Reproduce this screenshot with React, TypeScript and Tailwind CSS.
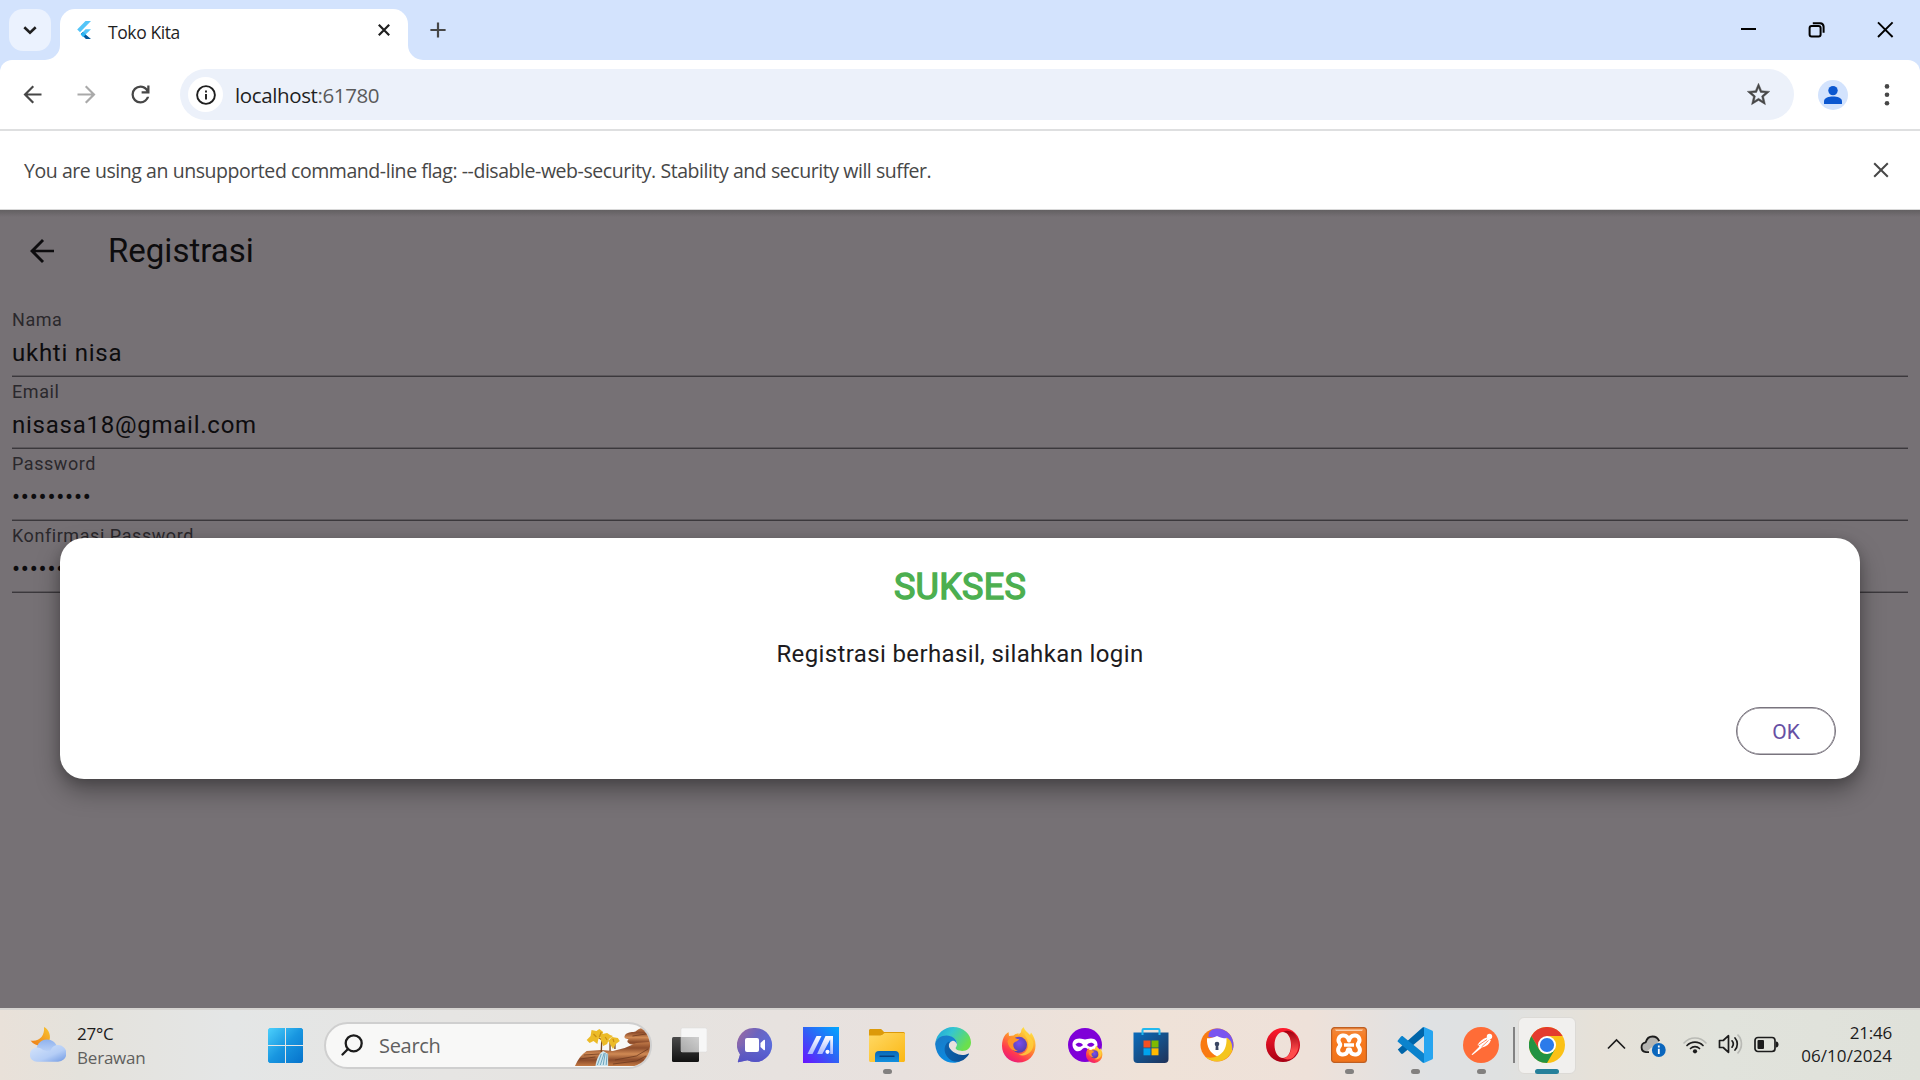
import type { ReactNode } from "react";

const SEGOE = "font-['Open_Sans','Noto_Sans',sans-serif]";

function Icon({ children, className = "size-9" }: { children: ReactNode; className?: string }) {
  return (
    <svg viewBox="0 0 36 36" className={`block shrink-0 ${className}`} fill="none">
      {children}
    </svg>
  );
}

function BackArrow({ className }: { className: string }) {
  return (
    <svg viewBox="0 0 24 24" className={`block shrink-0 ${className}`} fill="currentColor">
      <path d="M20 11.1H7.6l5.75-5.8L12 4l-8 8 8 8 1.35-1.3-5.75-5.8H20z" />
    </svg>
  );
}

function TabStrip() {
  return (
    <div className="flex h-[60px] bg-[#d3e3fd]">
      <div className="flex w-[45px] pt-[9px] pl-[9px]">
        <div className="z-10 flex h-[42px] w-[42px] shrink-0 items-center justify-center rounded-[14px] bg-[#ebf2fe]">
          <svg viewBox="0 0 14 14" className="size-[14px]" fill="none" stroke="#1f1f1f" strokeWidth="2.6">
            <path d="M1.3 4.2 7 9.6l5.7-5.4" />
          </svg>
        </div>
      </div>
      <div className="mt-[45px] h-[15px] w-[15px] bg-white">
        <div className="h-full w-full rounded-br-[15px] bg-[#d3e3fd]" />
      </div>
      <div className="mt-[9px] flex w-[348px] items-center rounded-t-[15px] bg-white pb-[9px]">
        <svg viewBox="0 0 14 18" className="ml-[17px] h-[18px] w-[14px]">
          <path d="M8.5 0H14L3 11.3.2 8.6z" fill="#54c5f8" />
          <path d="M8.5 8.3H14L8.6 13.6 5.9 10.9z" fill="#54c5f8" />
          <path d="m5.9 10.9-2 1.9L8.9 18H14l-5.4-4.4z" fill="#01579b" />
          <path d="m3.6 13.5 2.6-2.6 2.7 2.7-2.7 2.6z" fill="#29b6f6" />
        </svg>
        <span className={`${SEGOE} mt-[3px] ml-[17px] text-[17.5px] leading-[22px] tracking-[-0.4px] whitespace-nowrap text-[#1f1f1f]`}>
          Toko Kita
        </span>
        <svg viewBox="0 0 12 12" className="mr-[18px] ml-auto size-3" stroke="#1f1f1f" strokeWidth="2.2">
          <path d="m.8.8 10.4 10.4M11.2.8.8 11.2" />
        </svg>
      </div>
      <div className="mt-[45px] h-[15px] w-[15px] bg-white">
        <div className="h-full w-full rounded-bl-[15px] bg-[#d3e3fd]" />
      </div>
      <svg viewBox="0 0 16 16" className="mt-[22px] ml-[7px] size-4" stroke="#474747" strokeWidth="2.2">
        <path d="M8 .4v15.2M.4 8h15.2" />
      </svg>
      <div className="mt-[21px] mr-[26px] ml-auto flex gap-[52px] text-black">
        <svg viewBox="0 0 17 17" className="size-[17px]" stroke="currentColor" strokeWidth="2">
          <path d="M2 8h15" />
        </svg>
        <svg viewBox="0 0 17 17" className="size-[17px]" fill="none" stroke="currentColor" strokeWidth="2">
          <rect x="1.6" y="5" width="11" height="10.6" rx="2" />
          <path d="M4.8 2.2h7.4a3.6 3.6 0 0 1 3.4 3.4v6.2" />
        </svg>
        <svg viewBox="0 0 17 17" className="size-[17px]" stroke="currentColor" strokeWidth="1.9">
          <path d="m1 1.4 14.6 14.6M15.6 1.4 1 16" />
        </svg>
      </div>
    </div>
  );
}

function Toolbar() {
  return (
    <div className="bg-[#d3e3fd]">
      <div className="flex h-[71px] items-center rounded-t-[12px] border-b-2 border-[#dedfe0] bg-white text-[#474747]">
        <BackArrow className="ml-[19px] size-[27px]" />
        <BackArrow className="ml-[27px] size-[27px] rotate-180 text-[#a9a9a9]" />
        <svg viewBox="0 0 24 24" className="ml-[27px] size-[27px]" fill="currentColor">
          <path d="M12 20q-3.35 0-5.675-2.325T4 12t2.325-5.675T12 4q1.725 0 3.3.713T18 6.75V4h2v7h-7V9h4.2q-.8-1.4-2.187-2.2T12 6Q9.5 6 7.75 7.75T6 12t1.75 4.25T12 18q1.925 0 3.475-1.1T17.65 14h2.1q-.7 2.65-2.85 4.325T12 20" />
        </svg>
        <div className="ml-[26px] flex h-[51px] w-[1614px] items-center rounded-full bg-[#ecf1fa]">
          <div className="ml-[8px] flex size-[35px] items-center justify-center rounded-full bg-white">
            <svg viewBox="0 0 20 20" className="size-5" fill="none" stroke="#1f1f1f" strokeWidth="1.9">
              <circle cx="10" cy="10" r="8.9" />
              <path d="M10 9v5.6M10 5.4v2" />
            </svg>
          </div>
          <span className={`${SEGOE} ml-[12px] text-[20.5px] leading-[26px] tracking-[-0.380px] whitespace-nowrap text-[#5a5a5a]`}>
            <span className="text-[#1f1f1f]">localhost</span>:61780
          </span>
          <svg viewBox="0 0 24 24" className="mr-[22px] ml-auto size-[27px]" fill="currentColor" stroke="currentColor" strokeWidth=".4">
            <path d="M22 9.24l-7.19-.62L12 2 9.19 8.63 2 9.24l5.46 4.73L5.82 21 12 17.27 18.18 21l-1.63-7.03L22 9.24zM12 15.4l-3.76 2.27 1-4.28-3.32-2.88 4.38-.38L12 6.1l1.71 4.04 4.38.38-3.32 2.88 1 4.28L12 15.4z" />
          </svg>
        </div>
        <svg viewBox="0 0 30 30" className="ml-6 size-[30px]">
          <circle cx="15" cy="15" r="15" fill="#d3e3fd" />
          <circle cx="15" cy="10.6" r="4.7" fill="#0b57d0" />
          <path d="M6 24v-2.800c0-3.400 5-4.700 9-4.700s9 1.300 9 4.700V24z" fill="#0b57d0" />
        </svg>
        <svg viewBox="0 0 6 24" className="ml-[36px] h-6 w-[6px]" fill="currentColor">
          <circle cx="3" cy="3.400" r="2.300" />
          <circle cx="3" cy="11.800" r="2.300" />
          <circle cx="3" cy="20.200" r="2.300" />
        </svg>
      </div>
    </div>
  );
}

function InfoBar() {
  return (
    <div className="flex h-[79px] items-center border-b border-[#d8d8d8] bg-white">
      <span className={`${SEGOE} mt-[2px] ml-6 text-[19.500px] leading-[26px] tracking-[-0.440px] whitespace-nowrap text-[#474747]`}>
        You are using an unsupported command-line flag: --disable-web-security. Stability and security will suffer.
      </span>
      <svg viewBox="0 0 16 16" className="mr-[31px] ml-auto size-4" stroke="#474747" strokeWidth="2">
        <path d="m1.200 1.200 13.600 13.600M14.800 1.200 1.200 14.800" />
      </svg>
    </div>
  );
}

function Field({ label, value }: { label: string; value: string }) {
  return (
    <div className="h-[72px] border-b border-[#3b383c] pt-[5px] shadow-[inset_0_-1px_0_#5c585c]">
      <div className="text-[18px] leading-5 tracking-[0.560px] text-[#2a282c]">{label}</div>
      <div className="mt-[9px] text-[24px] leading-7 tracking-[0.750px] text-[#0d0c0e]">{value}</div>
    </div>
  );
}

function Registration() {
  return (
    <main className="relative h-[798px] overflow-hidden bg-[#767175] font-['Roboto',sans-serif]">
      <div className="absolute inset-x-0 top-0 h-[7px] bg-linear-to-b from-[#636062] to-[#767175]" />
      <header className="flex h-[84px] items-center text-[#0d0c0e]">
        <BackArrow className="mb-[2px] ml-6 size-9" />
        <h1 className="mb-[3px] ml-12 text-[33px] leading-[42px]">Registrasi</h1>
      </header>
      <div className="px-3 pt-[11px]">
        <Field label="Nama" value="ukhti nisa" />
        <Field label="Email" value="nisasa18@gmail.com" />
        <Field label="Password" value="•••••••••" />
        <Field label="Konfirmasi Password" value="•••••••••" />
      </div>
      <div className="absolute inset-x-[60px] top-[327.500px] flex h-[241.500px] flex-col items-center rounded-[24px] bg-white shadow-[0_12px_24px_rgba(0,0,0,0.340),0_3px_12px_rgba(0,0,0,0.160)]">
        <h2 className="mt-[28px] text-[36px] leading-[42px] tracking-[0.250px] text-[#4caf50] [-webkit-text-stroke:1.400px_#4caf50]">SUKSES</h2>
        <p className="mt-[28px] text-[24px] leading-9 tracking-[0.370px] text-[#1d1b20]">Registrasi berhasil, silahkan login</p>
        <button className="mt-auto mr-6 mb-6 h-12 w-[100px] self-end rounded-full border border-[#79747e] pt-px text-[21px] leading-6 text-[#6750a4] shadow-[inset_0_0_0_0.500px_#79747e]">
          OK
        </button>
      </div>
    </main>
  );
}

const TaskView = () => (
  <Icon>
    <defs>
      <linearGradient id="tv" x1="0" y1="0" x2="0" y2="1"><stop stopColor="#4a4a4a" /><stop offset="1" stopColor="#111" /></linearGradient>
      <linearGradient id="tv2" x1="0" y1="1" x2="1" y2="0"><stop stopColor="#a9a9a9" /><stop offset="1" stopColor="#cfcfcf" /></linearGradient>
    </defs>
    <rect x="1" y="10" width="27" height="25" rx="1.500" fill="url(#tv)" />
    <rect x="10" y="1" width="26" height="24" rx="1.500" fill="#f7f7f7" stroke="#d8d8d8" strokeWidth=".5" />
    <path d="M10 10h18v15H11.500L10 23.500z" fill="url(#tv2)" />
  </Icon>
);

const Chat = () => (
  <Icon>
    <defs>
      <linearGradient id="ch" x1="0" y1="0" x2="1" y2=".6"><stop stopColor="#a06a9e" /><stop offset=".5" stopColor="#6a64c0" /><stop offset="1" stopColor="#5a6fe0" /></linearGradient>
      <linearGradient id="ch2" x1="0" y1="0" x2="0" y2="1"><stop offset=".5" stopColor="#5250c0" stopOpacity="0" /><stop offset="1" stopColor="#5552c4" /></linearGradient>
    </defs>
    <path d="M18.500 1a17 17 0 1 1-8 32.200L1.300 35.300c-.5 0-.6-.4-.4-.8L3 27.500A17 17 0 0 1 18.500 1z" fill="url(#ch)" />
    <path d="M18.500 1a17 17 0 1 1-8 32.200L1.300 35.300c-.5 0-.6-.4-.4-.8L3 27.500A17 17 0 0 1 18.500 1z" fill="url(#ch2)" />
    <rect x="8" y="11" width="14" height="14" rx="2" fill="#fff" />
    <path d="M23.500 16l3.200-3c.7-.5 1.300-.2 1.300.6v9c0 .8-.6 1-1.300.5l-3.200-3z" fill="#fff" />
  </Icon>
);

const MyAsus = () => (
  <Icon>
    <defs>
      <linearGradient id="ma" x1="0" y1="1" x2="1" y2="0"><stop stopColor="#6a12ff" /><stop offset=".5" stopColor="#2f62f5" /><stop offset="1" stopColor="#00a8ff" /></linearGradient>
      <linearGradient id="ma2" x1="0" y1="0" x2="0" y2="1"><stop stopColor="#fff" /><stop offset="1" stopColor="#a9b9ff" /></linearGradient>
    </defs>
    <path d="M0 0h36v36H0z" fill="url(#ma)" />
    <path d="M13.500 9h5L9.500 27h-5zM22.500 9h7.500v18h-2.800V12.500L19.300 27h-5.200z" fill="url(#ma2)" />
    <circle cx="24.500" cy="24.800" r="2.100" fill="#fff" />
  </Icon>
);

const Folder = () => (
  <Icon>
    <defs>
      <linearGradient id="fo" x1="0" y1="0" x2="1" y2="1"><stop stopColor="#ffd965" /><stop offset="1" stopColor="#fbb713" /></linearGradient>
      <linearGradient id="fo2" x1="0" y1="0" x2="0" y2="1"><stop stopColor="#0a66b5" /><stop offset="1" stopColor="#1290df" /></linearGradient>
    </defs>
    <path d="M1.500 2H11c1 0 1.600.3 2.200 1L15 5h19.500A1.500 1.500 0 0 1 36 6.500V20H0V3.500C0 2.600.6 2 1.500 2z" fill="#dc9a0a" />
    <path d="M0 8.500h11.500c1 0 1.500-.3 2.200-.9L15.500 6H34.500c1 0 1.500.5 1.500 1.500v25.700c0 1-.7 1.800-1.700 1.800H1.700C.7 35 0 34.200 0 33.200z" fill="url(#fo)" />
    <path d="M6 35v-7a4 4 0 0 1 4-4h16a4 4 0 0 1 4 4v7z" fill="url(#fo2)" />
    <path d="M11 29.300h14" stroke="#083f7d" strokeWidth="1.400" strokeLinecap="round" />
  </Icon>
);

const Edge = () => (
  <Icon>
    <defs>
      <linearGradient id="ed1" x1="0" y1="0" x2="1" y2=".5"><stop stopColor="#1a9fdd" /><stop offset=".45" stopColor="#35c6d0" /><stop offset="1" stopColor="#6be04c" /></linearGradient>
      <linearGradient id="ed2" x1="0" y1="0" x2=".6" y2="1"><stop stopColor="#1b79c4" /><stop offset="1" stopColor="#0a8de4" /></linearGradient>
      <linearGradient id="ed3" x1="0" y1="0" x2="1" y2="0"><stop stopColor="#0d62ad" /><stop offset="1" stopColor="#0c4a8f" /></linearGradient>
    </defs>
    <path d="M.3 16C1.500 6.800 9 0 18 0c10.500 0 18 7.200 18 15.500 0 5.200-3.800 8.500-8.800 8.500-4.200 0-6.600-1.600-6.600-2.900 0-.8 1.400-1.500 1.400-4.100 0-4.400-4.600-8-10.500-8C6.500 9 2 12 .3 16z" fill="url(#ed1)" />
    <path d="M.1 17C1 12 6 8.600 11.500 8.600c6 0 10.500 4 10.500 8.600-1.200-2.500-3-3.800-4.800-3.200-3.200 1-4.400 4.800-3.200 9.200C15.500 29 20 34 25.500 34.300 16 38.500 1.500 34 .1 17z" fill="url(#ed2)" />
    <path d="M12.500 15.500c-3.500 3-4 9-.5 14 3.200 4.500 9 6.500 14 4.600 3.400-1.400 6-4 7.800-6.700.4-.7-.2-1-.8-.7-3 1.600-8.500 2-12.800-.6-5-3-8.200-7-5.500-11.600-.8.100-1.500.4-2.200 1z" fill="url(#ed3)" />
  </Icon>
);

const FirefoxShapes = ({ id }: { id: string }) => (
  <>
    <defs>
      <linearGradient id={`${id}a`} x1=".8" y1="0" x2=".2" y2="1"><stop stopColor="#fff04a" /><stop offset=".4" stopColor="#ff9a2a" /><stop offset=".75" stopColor="#ff3750" /><stop offset="1" stopColor="#e31587" /></linearGradient>
      <radialGradient id={`${id}b`} cx=".5" cy=".4" r=".6"><stop stopColor="#7a4ff0" /><stop offset="1" stopColor="#5440a8" /></radialGradient>
    </defs>
    <path d="M4.500 7.500 7.500 5l.5 4 4.500-.5C14 7 16 6.200 18 6.500L17 8l3-2.800C20 3 21 1.500 22.500 0c1 3.500 4 5 6.500 8l1-2.500c3 4 4.800 8.500 4.500 13.500A16.500 16.500 0 0 1 18 35.500C8.500 35.500 1 28.500 1 19c0-4.500 1-8.500 3.500-11.500z" fill={`url(#${id}a)`} />
    <circle cx="18" cy="17.800" r="8" fill={`url(#${id}b)`} />
    <path d="M6.500 14.500c1-3 3.500-4.500 7-4 1 1 2.500 1.500 4.500 1.500-.5 2.500-4.500 2-5.500 4.500-.8 2.500.5 6 4.500 7.500-5 .5-9-2-10.500-9.500z" fill="#ff9328" />
    <path d="M24 4c-2 4 2.500 6 3 11 1.500 7-3.500 12.500-9.500 12.500 7 3 14.500-2 15-10C33 12 27 9 24 4z" fill="#ffd23c" opacity=".8" />
  </>
);

const Firefox = () => (
  <Icon><FirefoxShapes id="ff" /></Icon>
);

const PrivateFirefox = () => (
  <Icon>
    <circle cx="18" cy="18" r="17" fill="#7f00d8" />
    <path fillRule="evenodd" d="M12.500 11.500c3 0 4 1 5.500 1s3-1 6-1c4.500 0 6.500 3 6.500 6s-2 6.800-5.500 6.800c-3.500 0-4.500-3.500-7-3.500s-3.500 3.500-7 3.500-5.500-3.600-5.500-6.800 2-6 7-6zM8.500 17.500c2 3 5.500 3 7.500.500-2-3-5.500-3-7.500-.5zm11.500.5c2 2.500 5.500 2.500 7.500-.5-2-2.500-5.500-2.500-7.500.5z" fill="#fff" />
    <g transform="translate(18.500 18.500) scale(.49)"><FirefoxShapes id="pf" /></g>
  </Icon>
);

const Store = () => (
  <Icon>
    <defs>
      <linearGradient id="st" x1="0" y1="0" x2="1" y2="1"><stop stopColor="#0a6cbc" /><stop offset=".6" stopColor="#174a80" /><stop offset="1" stopColor="#1f3158" /></linearGradient>
    </defs>
    <path d="M.5 5.500h35V32a4 4 0 0 1-4 4h-27a4 4 0 0 1-4-4z" fill="url(#st)" />
    <path d="M9.500 8V3.200c0-.8.500-1.200 1.200-1.200h14.600c.7 0 1.200.4 1.200 1.200V8" stroke="#22b8ee" strokeWidth="2" />
    <path d="M10.500 13.500h7v7h-7z" fill="#f25022" />
    <path d="M18.500 13.500h7v7h-7z" fill="#7fba00" />
    <path d="M10.500 21.300h7v7h-7z" fill="#00a4ef" />
    <path d="M18.500 21.300h7v7h-7z" fill="#ffb900" />
  </Icon>
);

const SecureBrowser = () => (
  <Icon>
    <circle cx="18" cy="18" r="16.500" fill="#f97a12" />
    <path d="M9.500 10C9 5 13 1.500 18 1.500A16.500 16.500 0 0 1 34.500 18c0 2-.3 3.500-1 5.200L25 12z" fill="#7a55ef" />
    <path d="M27.500 10.500c4.500 2 6.500 7.500 5.500 13.500A16.500 16.500 0 0 1 6.500 30c5 1.500 9 .5 11.500-1z" fill="#f4c51e" />
    <path d="M18 9c2.800 1.500 6 2.300 9.500 2.300.5 8.200-2.500 15-9.500 17.900-7-2.900-10.500-9.700-10-17.900C11.500 11.300 15.200 10.500 18 9z" fill="#fff" />
    <circle cx="18" cy="17" r="2.300" fill="#3b4663" />
    <path d="M16.800 18h2.400l.3 5h-3z" fill="#3b4663" />
  </Icon>
);

const Opera = () => (
  <Icon>
    <defs>
      <linearGradient id="op" x1="0" y1="0" x2="0" y2="1"><stop stopColor="#ff1b2d" /><stop offset="1" stopColor="#a70014" /></linearGradient>
      <linearGradient id="op2" x1="0" y1="0" x2="0" y2="1"><stop stopColor="#9c0010" /><stop offset=".7" stopColor="#ff4b4b" /></linearGradient>
    </defs>
    <path fillRule="evenodd" d="M18 1a17 17 0 1 0 0 34 17 17 0 0 0 0-34zm0 4c5 0 8 6 8 13s-3 13-8 13-8.500-6-8.500-13S13 5 18 5z" fill="url(#op)" />
    <path d="M18 5c3-2 7-1.500 10.500.8a17 17 0 0 1 0 24.400C25 33 21 33 18 31c5 0 8.500-6 8.500-13S23 5 18 5z" fill="url(#op2)" />
  </Icon>
);

const Xampp = () => (
  <Icon>
    <defs>
      <linearGradient id="xa" x1="0" y1="0" x2="0" y2="1"><stop stopColor="#ee8a42" /><stop offset=".3" stopColor="#f97a1e" /><stop offset="1" stopColor="#f0731a" /></linearGradient>
    </defs>
    <rect x=".6" y=".6" width="34.800" height="34.800" rx="3" fill="url(#xa)" stroke="#bf5f22" strokeWidth="1.200" />
    <path d="M4 2.500h28l-1 1.500H5z" fill="#f9cfae" />
    <path d="M18 13.500c-1-4-3.500-5.500-6.500-5-4 .7-5 5-3 7.500.8 1 .8 2.500 0 3.500-2.500 3-1.500 7.500 2.500 8 3.500.4 5.500-1.500 6-5h2c.5 3.500 2.500 5.400 6 5 4-.5 5-5 2.500-8-.8-1-.8-2.500 0-3.500 2-2.500 1-6.800-3-7.500-3-.5-5.500 1-6.500 5z" stroke="#fff" strokeWidth="4" strokeLinejoin="round" />
    <path d="M13 18h10" stroke="#fff" strokeWidth="3.500" />
  </Icon>
);

const VsCode = () => (
  <Icon>
    <path d="m.8 22.500 3 3.800c.6.700 1.500.8 2.300.2L27 9V0c-.7 0-1.500.3-2 .9L.8 22.500z" fill="#0065a9" />
    <path d="m.8 13.500 3-3.800c.6-.7 1.500-.8 2.300-.2L27 26.500V36c-.7 0-1.500-.3-2-.9L.8 14.800a1 1 0 0 1 0-1.300z" fill="#0b83cd" />
    <path d="M27 0l8 3.500c.7.300 1 .8 1 1.500v26c0 .7-.3 1.200-1 1.500L27 36c-.7 0-1 0-1.400-.3.900.3 1.400-.4 1.400-1.200V1.500c0-.8-.5-1.500-1.400-1.200C26 0 26.300 0 27 0z" fill="#27a5f0" />
  </Icon>
);

const Postman = () => (
  <Icon>
    <circle cx="18" cy="18" r="18" fill="#ff6c37" />
    <circle cx="26.500" cy="9.500" r="2.700" fill="#fff" />
    <path d="M23.500 10.500c-4 1.500-7 4-9 7.500l2 1.500-8 8 1 .5 9.500-7.500c4.500-.8 7.500-3.500 9-7.500z" fill="#fff" />
    <path d="m15 18.500 9-6M18.500 20l7-6.500" stroke="#ff6c37" strokeWidth=".8" />
  </Icon>
);

const Chrome = () => (
  <Icon>
    <circle cx="18" cy="18" r="18" fill="#fbc116" />
    <path d="M18 9h15.600A18 18 0 0 0 2.400 9l7.800 13.500z" fill="#e33b2e" />
    <path d="M2.400 9A18 18 0 0 0 18 36l7.800-13.500L18 27a9 9 0 0 1-7.800-4.500z" fill="#229342" />
    <circle cx="18" cy="18" r="9" fill="#fff" />
    <circle cx="18" cy="18" r="7.100" fill="#2b7bea" />
  </Icon>
);

const apps: { icon: ReactNode; running?: boolean }[] = [
  { icon: <TaskView /> },
  { icon: <Chat /> },
  { icon: <MyAsus /> },
  { icon: <Folder />, running: true },
  { icon: <Edge /> },
  { icon: <Firefox /> },
  { icon: <PrivateFirefox /> },
  { icon: <Store /> },
  { icon: <SecureBrowser /> },
  { icon: <Opera /> },
  { icon: <Xampp />, running: true },
  { icon: <VsCode />, running: true },
  { icon: <Postman />, running: true },
];

function Weather() {
  return (
    <div className="flex w-[252px] items-center pl-[30px]">
      <Icon>
        <defs>
          <linearGradient id="moon" x1="1" y1="0" x2="0" y2="1"><stop stopColor="#f8c530" /><stop offset="1" stopColor="#ee7a16" /></linearGradient>
          <linearGradient id="cloud" x1="0" y1="0" x2="0" y2="1"><stop stopColor="#8fb2ee" /><stop offset="1" stopColor="#c9dcfa" /></linearGradient>
          <linearGradient id="cloud2" x1="0" y1="0" x2="1" y2="1"><stop stopColor="#d6e5fb" /><stop offset=".6" stopColor="#b4cdf6" /><stop offset="1" stopColor="#6f98e2" /></linearGradient>
        </defs>
        <path d="M14 0c5 2.500 7.500 9 5 14.500C16.500 20 6 21 .5 13.500 9 15 15 9 14 0z" fill="url(#moon)" />
        <path d="M6 26c0-8 4-13.500 11-13.500 5 0 8.500 3 10 7l-3 9z" fill="url(#cloud)" />
        <path d="M7 20.500c2.500 0 4.500 1 6 2.500l7 2c1.500-4.500 4-7 8-7a8.400 8.400 0 0 1 0 16.800H7A7.100 7.100 0 0 1 7 20.500z" fill="url(#cloud2)" />
      </Icon>
      <div className={`${SEGOE} mt-px ml-[11px] text-[17px] leading-6 tracking-[-0.200px] whitespace-nowrap`}>
        <div className="text-[#1c1c1c]">27°C</div>
        <div className="text-[#5f5f5d]">Berawan</div>
      </div>
    </div>
  );
}

function SearchBox() {
  return (
    <div className="ml-1.5 flex h-[47px] w-[328px] items-center overflow-hidden rounded-full border-2 border-[#cfcfcf] bg-[#f8f8f7]">
      <svg viewBox="0 0 22 22" className="ml-[15px] size-[22px]" fill="none" stroke="#1c1c1c" strokeWidth="2.300" strokeLinecap="round">
        <circle cx="12.700" cy="9.300" r="8" />
        <path d="m7 15-5.500 5.500" />
      </svg>
      <span className={`${SEGOE} mt-px ml-4 text-[20px] leading-7 tracking-[-0.300px] text-[#5f5f5f]`}>Search</span>
      <svg viewBox="0 0 78 42" preserveAspectRatio="none" className="mt-px ml-auto h-[42px] w-[76px]">
        <defs>
          <linearGradient id="rock" x1="0" y1="0" x2="0" y2="1"><stop stopColor="#c27a48" /><stop offset=".25" stopColor="#8e4d2c" /><stop offset=".5" stopColor="#d08a54" /><stop offset=".75" stopColor="#8a4a2a" /><stop offset="1" stopColor="#c47a44" /></linearGradient>
        </defs>
        <path d="M52 11c1-3 5-4 9-4 3 0 5-4 9-4l8 3v16l-10-2c-5 0-10 0-12-2-2-1-1-3 0-4-3 0-5-1-4-3z" fill="url(#rock)" />
        <path d="M1 41c3-7 7-12 12-15l15-1 12 1 12-3 12-5 14-1v24z" fill="url(#rock)" />
        <path d="m6 34 16-2M10 30l16-1M42 35l22-4 12-7M40 39l24-3 10-5M60 11l14-2" stroke="#6f3a20" strokeWidth=".8" fill="none" />
        <path d="M22 41c1-7 4-13 8-15l5 3v12z" fill="#cfe6ee" />
        <path d="m24 40 4-11m-1 11 4-12m-1 12 2-12m1 12 1-11" stroke="#6ba5be" strokeWidth="1" fill="none" />
        <path d="m28 27 .5-12-5-4M28.500 18l5-5M37 26V16M42 24v-8" stroke="#7a4a22" strokeWidth="1.400" fill="none" />
        <path d="M13 15l4-4 1-6 5 1 3-2 4 3-2 5-3 2-1 5-4-3-4 2zM27 14l2-5 5-1 3 2 3 1-4 3-2 5-4 2zM35 16l4-4 6 1 2 3-4 3-3 5z" fill="#ecbb27" />
        <path d="m20 9 3 3m5-5-2 5m6 0 2 3m6-1 1 3" stroke="#c98e12" strokeWidth="1.200" />
      </svg>
    </div>
  );
}

function Tray() {
  return (
    <div className="ml-auto flex items-center pb-[2px] text-[#1c1c1c]">
      <svg viewBox="0 0 19 12" className="h-3 w-[19px]" fill="none" stroke="currentColor" strokeWidth="1.700">
        <path d="m1 10.500 8.500-8.500 8.500 8.500" />
      </svg>
      <svg viewBox="0 0 26 22" className="mt-1 ml-[14px] h-[22px] w-[26px]" fill="none">
        <path d="M6 17a4.800 4.800 0 0 1-.5-9.500C6.500 4 9.500 2 12.500 2s5.500 1.600 6.500 4.500" fill="#b5b5b2" />
        <path d="M9 17.200H6A5 5 0 0 1 5.700 7.300C6.700 3.800 9.300 1.500 12.500 1.500c3 0 5.500 1.700 6.700 4.700" stroke="#1c1c1c" strokeWidth="1.800" />
        <circle cx="18.800" cy="15" r="6.900" fill="#0a66bd" />
        <path d="M18.800 13.800v5.200M18.800 10.500v2" stroke="#fff" strokeWidth="1.800" />
      </svg>
      <svg viewBox="0 0 24 19" className="ml-[17px] h-[19px] w-6" fill="none" strokeLinecap="round">
        <path d="M1 8a14.500 14.500 0 0 1 22 0" stroke="#b9bab5" strokeWidth="1.600" />
        <path d="M4 10.500a11 11 0 0 1 16 0M7.500 13.500a6.500 6.500 0 0 1 9 0" stroke="currentColor" strokeWidth="1.700" />
        <circle cx="12" cy="16.300" r="2.100" fill="currentColor" />
      </svg>
      <svg viewBox="0 0 25 20" className="ml-[11px] h-5 w-[25px]" fill="none" stroke="currentColor" strokeWidth="1.700" strokeLinecap="round" strokeLinejoin="round">
        <path d="M1.500 6.500h3.700l5.300-4.800v16.600L5.200 13.500H1.500z" />
        <path d="M14 6.800a5 5 0 0 1 0 6.400M17 4a9 9 0 0 1 0 12" />
        <path d="M20 1.200a13 13 0 0 1 0 17.600" stroke="#b9bab5" />
      </svg>
      <svg viewBox="0 0 25 17" className="ml-[11px] h-[17px] w-[25px]" fill="none">
        <rect x="1" y="1.500" width="20" height="14" rx="3" stroke="currentColor" strokeWidth="1.700" />
        <rect x="3.500" y="4" width="6.500" height="9" rx="1" fill="currentColor" />
        <path d="M22 5.500c1.600 0 2.500 1.200 2.500 3s-.9 3-2.500 3z" fill="currentColor" />
      </svg>
      <div className={`${SEGOE} mr-[28px] ml-[22px] text-right text-[17px] leading-[23px] tracking-[0.050px] whitespace-nowrap`}>
        <div className="tracking-[-0.200px]">21:46</div>
        <div>06/10/2024</div>
      </div>
    </div>
  );
}

function Taskbar() {
  return (
    <footer className="flex h-[72px] items-center border-t-2 border-[#d6d4d1] bg-[linear-gradient(90deg,#e9e1d9_0px,#e4e2dc_80px,#e4e6e6_230px,#e6e5e3_450px,#e6e3e0_660px,#e8e1de_900px,#efe2d8_1150px,#eee1d9_1310px,#dfe1e3_1430px,#dfe1e1_1500px,#e6e1d8_1600px,#e1e3dc_1720px,#dfe1da_1920px)]">
      <Weather />
      <div className="grid w-[66px] place-items-center">
        <svg viewBox="0 0 35 35" className="size-[35px]">
          <defs>
            <linearGradient id="win" gradientUnits="userSpaceOnUse" x1="0" y1="0" x2="35" y2="35"><stop stopColor="#4cd0fc" /><stop offset=".5" stopColor="#1896e0" /><stop offset="1" stopColor="#0672cb" /></linearGradient>
          </defs>
          <path d="M1.500 0H17v17H0V1.500zM18 0h15.500L35 1.500V17H18zM0 18h17v17H1.500L0 33.500zM18 18h17v15.500L33.500 35H18z" fill="url(#win)" />
        </svg>
      </div>
      <SearchBox />
      <div className="ml-1 flex">
        {apps.map((app, i) => (
          <div key={i} className="relative grid w-[66px] place-items-center">
            {app.icon}
            {app.running && <span className="absolute top-[42px] h-[5px] w-[9px] rounded-full bg-[#82807f]" />}
          </div>
        ))}
      </div>
      <div className="-ml-px h-9 w-[2px] bg-[#828282]" />
      <div className="relative ml-[3px] grid h-[57px] w-[58px] place-items-center rounded-md border border-[#dcdad6] bg-[#f1f0ee]">
        <Chrome />
        <span className="absolute -bottom-px h-[5px] w-6 rounded-full bg-[#26809a]" />
      </div>
      <Tray />
    </footer>
  );
}

export default function App() {
  return (
    <div className="flex h-[1080px] w-[1920px] flex-col overflow-hidden bg-white">
      <TabStrip />
      <Toolbar />
      <InfoBar />
      <Registration />
      <Taskbar />
    </div>
  );
}
